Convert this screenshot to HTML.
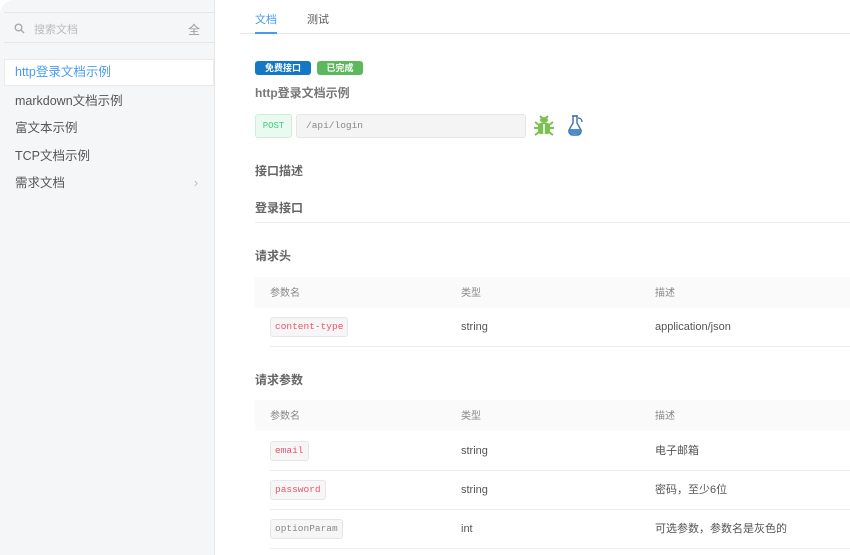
<!DOCTYPE html>
<html><head><meta charset="utf-8"><style>
*{box-sizing:border-box;margin:0;padding:0}
body{width:850px;height:555px;overflow:hidden;background:#fff;font-family:"Liberation Sans","Noto Sans CJK SC",sans-serif;color:#555;position:relative}
.side{position:absolute;left:0;top:0;width:215px;height:555px;background:#f5f6f7;border-right:1px solid #e8e8e8;border-top-left-radius:14px}
.search{position:absolute;left:4px;top:12px;width:210px;height:31px;border-top:1px solid #e6e6e6;border-bottom:1px solid #e6e6e6;font-size:11px;color:#bbb}
.search .t{position:absolute;left:30px;top:8px}
.search .q{position:absolute;right:14px;top:8px;color:#999;font-size:12px}
.item{position:absolute;left:4px;width:210px;height:27px;font-size:12.5px;color:#555;padding-left:11px;line-height:27px}
.item.act{background:#fff;color:#4a9bf0;border:1px solid #eaeaea;line-height:25px;padding-left:10px}
.tabs{position:absolute;left:240px;top:0;width:610px;height:34px;border-bottom:1px solid #e8e8e8;font-size:11px}
.tab{position:absolute;top:11px}
.tag{position:absolute;top:61px;height:14px;border-radius:3px;color:#fff;font-size:9px;line-height:14px;text-align:center;font-weight:bold}
.h{position:absolute;left:255px;font-size:12px;color:#666;font-weight:bold;line-height:14px}
.mono{font-family:"Liberation Mono","Noto Sans CJK SC",monospace}
.thead{position:absolute;left:255px;width:595px;height:31px;background:#fafafa;font-size:10px;color:#888}
.thead span,.row span{position:absolute;line-height:14px}
.row{position:absolute;left:270px;width:580px;height:39px;border-bottom:1px solid #eee;font-size:11px;color:#555}
.row span.c{top:12px}
.code{top:9px;height:20px;line-height:18px!important;padding:0 4px;background:#f6f6f6;border:1px solid #e6e6e6;border-radius:3px;font-family:"Liberation Mono",monospace;font-size:9.5px;color:#f0506e}
</style></head><body>
<div class="side">
 <div class="search">
  <svg style="position:absolute;left:10px;top:10px" width="11" height="11" viewBox="0 0 11 11"><circle cx="4.5" cy="4.5" r="3.3" fill="none" stroke="#aaa" stroke-width="1.4"/><path d="M7 7l3 3" stroke="#aaa" stroke-width="1.5"/></svg>
  <span class="t">搜索文档</span><span class="q">全</span>
 </div>
 <div class="item act" style="top:59px">http登录文档示例</div>
 <div class="item" style="top:88px">markdown文档示例</div>
 <div class="item" style="top:115px">富文本示例</div>
 <div class="item" style="top:143px">TCP文档示例</div>
 <div class="item" style="top:170px">需求文档<span style="position:absolute;right:16px;color:#bbb">›</span></div>
</div>
<div class="tabs">
 <span class="tab" style="left:15px;color:#4a9bf0">文档</span>
 <div style="position:absolute;left:15px;top:32px;width:22px;height:2px;background:#4a9bf0"></div>
 <span class="tab" style="left:67px;color:#555">测试</span>
</div>
<div class="tag" style="left:255px;width:56px;background:#1379c5">免费接口</div>
<div class="tag" style="left:317px;width:46px;background:#5cb85c">已完成</div>
<div class="h" style="top:86px;color:#777">http登录文档示例</div>
<div style="position:absolute;left:255px;top:114px;width:37px;height:24px;background:#eafaf1;border:1px solid #cdeedc;border-radius:3px;color:#3ccf80;font-size:9px;line-height:22px;text-align:center" class="mono">POST</div>
<div style="position:absolute;left:296px;top:114px;width:230px;height:24px;background:#f4f4f4;border:1px solid #e6e6e6;border-radius:3px;color:#888;font-size:9.5px;line-height:22px;padding-left:9px" class="mono">/api/login</div>
<svg style="position:absolute;left:534px;top:115px" width="20" height="22" viewBox="0 0 20 22"><g fill="#7cc050"><ellipse cx="10" cy="5" rx="4" ry="3"/><rect x="4" y="8" width="12" height="11" rx="3"/><path d="M1 7l4 3M19 7l-4 3M0 13h5M20 13h-5M1 20l4-3M19 20l-4-3M6 1l2 2M14 1l-2 2" stroke="#7cc050" stroke-width="2"/></g><path d="M10 9v10" stroke="#fff" stroke-width="1.5"/></svg>
<svg style="position:absolute;left:566px;top:114px" width="18" height="22" viewBox="0 0 18 22"><path d="M7 2v7L3 16a4 4 0 0 0 4 5h4a4 4 0 0 0 4-5l-4-7V2z" fill="#fff" stroke="#3f6fa8" stroke-width="1.4"/><path d="M4 15h10l1 2a3 3 0 0 1-3 3H6a3 3 0 0 1-3-3z" fill="#4b8ed0"/><path d="M6 2h6M12 4c3 0 4 2 4 4" stroke="#3f6fa8" stroke-width="1.3" fill="none"/></svg>
<div class="h" style="top:164px">接口描述</div>
<div class="h" style="top:201px">登录接口</div>
<div style="position:absolute;left:255px;top:222px;width:595px;height:1px;background:#eee"></div>
<div class="h" style="top:249px">请求头</div>
<div class="thead" style="top:277px"><span style="left:15px;top:10px">参数名</span><span style="left:206px;top:10px">类型</span><span style="left:400px;top:10px">描述</span></div>
<div class="row" style="top:308px"><span class="code" style="left:0">content-type</span><span class="c" style="left:191px">string</span><span class="c" style="left:385px">application/json</span></div>
<div class="h" style="top:373px">请求参数</div>
<div class="thead" style="top:400px"><span style="left:15px;top:10px">参数名</span><span style="left:206px;top:10px">类型</span><span style="left:400px;top:10px">描述</span></div>
<div class="row" style="top:432px"><span class="code" style="left:0">email</span><span class="c" style="left:191px">string</span><span class="c" style="left:385px">电子邮箱</span></div>
<div class="row" style="top:471px"><span class="code" style="left:0">password</span><span class="c" style="left:191px">string</span><span class="c" style="left:385px">密码，至少6位</span></div>
<div class="row" style="top:510px"><span class="code" style="left:0;color:#888">optionParam</span><span class="c" style="left:191px">int</span><span class="c" style="left:385px">可选参数，参数名是灰色的</span></div>
</body></html>
